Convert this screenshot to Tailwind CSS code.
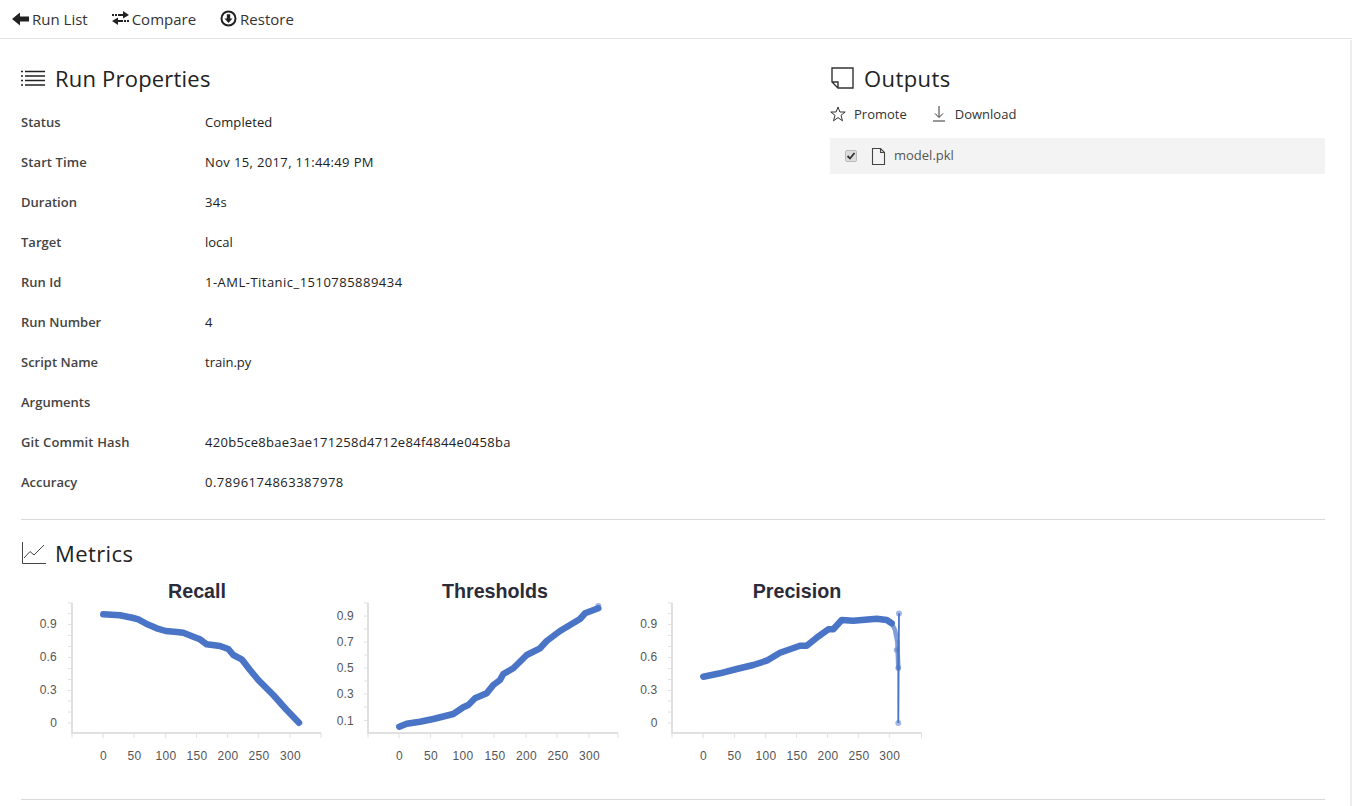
<!DOCTYPE html>
<html lang="en">
<head>
    <meta charset="UTF-8">
    <meta name="viewport" content="width=device-width, initial-scale=1.0">
    <title>Run Properties</title>
    <script src="https://cdn.jsdelivr.net/npm/@tailwindcss/browser@4"></script>
</head>
<body class="relative bg-white h-[806px] overflow-hidden font-['Open_Sans',sans-serif] text-[#222]">
    <!-- Scrollbar thumb -->
    <div class="absolute right-0 top-[40px] bottom-0 w-[2px] bg-[#eeeeee]"></div>

    <!-- Toolbar -->
    <div class="h-[39px] border-b border-[#e6e6e6] flex items-center pl-3 text-[15px] text-[#333]">
        <div class="flex items-center gap-[2px] mr-6">
            <svg width="18" height="14" viewBox="0 0 18 14"><path d="M0 7 L8 0.5 V4.5 H17 V9.5 H8 V13.5 Z" fill="#222"/></svg>
            <span>Run List</span>
        </div>
        <div class="flex items-center gap-[3px] mr-6">
            <svg width="17" height="14" viewBox="0 0 17 14" class="mb-[2px]"><path d="M0 3 H2 V5 H0 Z M3 3 H5 V5 H3 Z M6 3 H11 V0 L17 4 L11 7.5 V5 H6 Z" fill="#222"/><path d="M17 9 H15 V11 H17 Z M14 9 H12 V11 H14 Z M11 9 H6 V6.5 L0 10 L6 14 V11 H11 Z" fill="#222"/></svg>
            <span>Compare</span>
        </div>
        <div class="flex items-center gap-[3px]">
            <svg width="17" height="17" viewBox="0 0 17 17" class="mb-[2px]"><circle cx="8.5" cy="8.5" r="7" fill="none" stroke="#222" stroke-width="2"/><path d="M8.5 13 L4.5 8.5 H6.8 V4.2 H10.2 V8.5 H12.5 Z" fill="#222"/></svg>
            <span>Restore</span>
        </div>
    </div>

    <div class="pl-[21px] pr-[27px]">
        <!-- Properties and outputs -->
        <div class="flex h-[481px] border-b border-[#d9d9d9]">
            <div class="w-[809px]">
                <div class="flex items-center h-[38px] mt-[20px] mb-[6px]">
                    <svg width="24" height="16" viewBox="0 0 24 16" class="mr-[10px]"><path d="M0 1.5 H2 M0 6 H2 M0 10.5 H2 M0 15 H2 M4 1.5 H24 M4 6 H24 M4 10.5 H24 M4 15 H24" stroke="#222" stroke-width="1.4" fill="none"/></svg>
                    <h1 class="text-[22px] font-normal text-[#222] tracking-[0.2px]">Run Properties</h1>
                </div>
                <div class="text-[13px]">
                    <div class="flex items-center h-10"><div class="w-[184px] font-semibold text-[#444]">Status</div><div class="tracking-[0.1px]">Completed</div></div>
                    <div class="flex items-center h-10"><div class="w-[184px] font-semibold text-[#444] tracking-[0.1px]">Start Time</div><div class="tracking-[0.36px]">Nov 15, 2017, 11:44:49 PM</div></div>
                    <div class="flex items-center h-10"><div class="w-[184px] font-semibold text-[#444]">Duration</div><div class="tracking-[0.3px]">34s</div></div>
                    <div class="flex items-center h-10"><div class="w-[184px] font-semibold text-[#444]">Target</div><div>local</div></div>
                    <div class="flex items-center h-10"><div class="w-[184px] font-semibold text-[#444]">Run Id</div><div class="tracking-[0.48px]">1-AML-Titanic_1510785889434</div></div>
                    <div class="flex items-center h-10"><div class="w-[184px] font-semibold text-[#444]">Run Number</div><div>4</div></div>
                    <div class="flex items-center h-10"><div class="w-[184px] font-semibold text-[#444]">Script Name</div><div>train.py</div></div>
                    <div class="flex items-center h-10"><div class="w-[184px] font-semibold text-[#444]">Arguments</div><div></div></div>
                    <div class="flex items-center h-10"><div class="w-[184px] font-semibold text-[#444] tracking-[0.13px]">Git Commit Hash</div><div class="tracking-[0.3px]">420b5ce8bae3ae171258d4712e84f4844e0458ba</div></div>
                    <div class="flex items-center h-10"><div class="w-[184px] font-semibold text-[#444]">Accuracy</div><div class="tracking-[0.5px]">0.7896174863387978</div></div>
                </div>
            </div>
            <div class="flex-1">
                <div class="flex items-center h-[38px] mt-[20px]">
                    <svg width="23" height="22" viewBox="0 0 23 22" class="ml-[1px] mr-[10px]"><path d="M1 1 H22 V21 H7 L1 15 Z M1 15 H7 V21" fill="none" stroke="#333" stroke-width="1.4"/></svg>
                    <h2 class="text-[22px] font-normal text-[#222] tracking-[0.4px]">Outputs</h2>
                </div>
                <div class="flex items-center h-[20px] mt-[8px] text-[13px] text-[#333]">
                    <svg width="16" height="16" viewBox="0 0 16 16" class="mr-[8px] mb-[2px]"><path d="M8 1 L9.9 6 H15.2 L11 9.3 L12.5 14.8 L8 11.6 L3.5 14.8 L5 9.3 L0.8 6 H6.1 Z" fill="none" stroke="#333" stroke-width="1"/></svg>
                    <span class="mr-[25px]">Promote</span>
                    <svg width="14" height="16" viewBox="0 0 14 16" class="mr-[9px] mb-[2px]"><path d="M7 0 V11 M3 7.5 L7 11.5 L11 7.5 M1 15 H13" fill="none" stroke="#333" stroke-width="1"/></svg>
                    <span>Download</span>
                </div>
                <div class="flex items-center h-[36px] mt-[13px] bg-[#f3f3f3] text-[13px] text-[#555]">
                    <span class="ml-[15px] mr-[14px] w-[12px] h-[12px] rounded-[2px] border border-[#bbb] bg-[#ddd] flex items-center justify-center">
                        <svg width="10" height="10" viewBox="0 0 10 10"><path d="M1.5 5 L4 7.5 L8.5 2" fill="none" stroke="#333" stroke-width="1.8"/></svg>
                    </span>
                    <svg width="15" height="17" viewBox="0 0 15 17" class="mr-[8px]"><path d="M1.5 0.5 H9.5 L13.5 4.5 V16.5 H1.5 Z M9.5 0.5 V4.5 H13.5" fill="none" stroke="#444" stroke-width="1.1"/></svg>
                    <span>model.pkl</span>
                </div>
            </div>
        </div>

        <!-- Metrics -->
        <div class="flex items-center h-[30px] mt-[18px]">
            <svg width="24" height="22" viewBox="0 0 24 22" class="ml-[1px] mr-[9px]"><path d="M0.5 0 V21.5 H24" fill="none" stroke="#444" stroke-width="1"/><path d="M2 16 L8 9.5 L12 13 L22 3" fill="none" stroke="#444" stroke-width="1"/></svg>
            <h2 class="text-[22px] font-normal text-[#222] tracking-[0.4px]">Metrics</h2>
        </div>
        <div class="flex h-[192px] mt-[10px] border-b border-[#d9d9d9] box-content pb-[29px]">
            <!-- Recall -->
            <svg width="306" height="192" viewBox="21 578 306 192" font-family="Liberation Sans, sans-serif">
                <text x="197" y="598" text-anchor="middle" font-size="19.7" font-weight="700" fill="#2b2b3a">Recall</text>
                <path d="M72 603 V733 H321" fill="none" stroke="#e0e0e0" stroke-width="2"/>
                <path d="M68 603H72M68 613.6H72M68 624.5H72M68 635.5H72M68 646.5H72M68 657.5H72M68 668.5H72M68 679.5H72M68 690.5H72M68 701H72M68 712H72M68 723H72M72 733V738M103 733V738M134 733V738M165.6 733V738M196.6 733V738M227.6 733V738M258.6 733V738M290 733V738M321 733V738" stroke="#e0e0e0" stroke-width="1"/>
                <g font-size="12" fill="#555" text-anchor="end" letter-spacing="0.2"><text x="57" y="628">0.9</text><text x="57" y="661">0.6</text><text x="57" y="694">0.3</text><text x="57" y="727">0</text></g>
                <g font-size="12" fill="#555" text-anchor="middle" letter-spacing="0.3"><text x="103.5" y="760">0</text><text x="134.5" y="760">50</text><text x="166" y="760">100</text><text x="197" y="760">150</text><text x="228" y="760">200</text><text x="259" y="760">250</text><text x="290.5" y="760">300</text></g>
                <polyline points="103.3,614.3 120,615.3 133.3,618 138.3,619.3 146.7,624 156.7,628.3 165.7,631 176.7,632 183.3,632.7 193.3,636.7 200,639.3 206.7,644.3 220,646 228.3,649 233.3,655 241.7,659.3 250,670 258.3,680 273.3,695 286.7,710 299,722.7" fill="none" stroke="#4a74c6" stroke-width="6.5" stroke-linecap="round" stroke-linejoin="round"/>
            </svg>
            <!-- Thresholds -->
            <svg width="298" height="192" viewBox="327 578 298 192" font-family="Liberation Sans, sans-serif">
                <text x="495" y="598" text-anchor="middle" font-size="19.7" font-weight="700" fill="#2b2b3a">Thresholds</text>
                <path d="M368 603 V733 H618" fill="none" stroke="#e0e0e0" stroke-width="2"/>
                <path d="M364 603H368M364 616H368M364 629H368M364 642H368M364 655H368M364 668H368M364 681H368M364 694H368M364 707H368M364 720.5H368M368 733V738M399 733V738M430.6 733V738M462 733V738M494 733V738M526 733V738M557 733V738M589 733V738M618 733V738" stroke="#e0e0e0" stroke-width="1"/>
                <g font-size="12" fill="#555" text-anchor="end" letter-spacing="0.2"><text x="354" y="620">0.9</text><text x="354" y="646">0.7</text><text x="354" y="672">0.5</text><text x="354" y="698">0.3</text><text x="354" y="725">0.1</text></g>
                <g font-size="12" fill="#555" text-anchor="middle" letter-spacing="0.3"><text x="399.5" y="760">0</text><text x="431" y="760">50</text><text x="463" y="760">100</text><text x="495" y="760">150</text><text x="526.5" y="760">200</text><text x="558" y="760">250</text><text x="589.5" y="760">300</text></g>
                <polyline points="399.3,726.7 406.7,723.7 420,721.7 433.3,719 453.3,714 463.3,707.3 468.3,705 475,698.3 486.7,693.3 493.3,685 500,680 503.3,674 513.3,668.3 526.7,655 540,648.3 546.7,641 560,631 580,619 585,613.3 598.3,608.3" fill="none" stroke="#4a74c6" stroke-width="6.5" stroke-linecap="round" stroke-linejoin="round"/>
                <circle cx="598.3" cy="606" r="3" fill="#4a74c6" fill-opacity="0.55"/>
            </svg>
            <!-- Precision -->
            <svg width="300" height="192" viewBox="625 578 300 192" font-family="Liberation Sans, sans-serif">
                <text x="797" y="598" text-anchor="middle" font-size="19.7" font-weight="700" fill="#2b2b3a">Precision</text>
                <path d="M672 603 V733 H921.5" fill="none" stroke="#e0e0e0" stroke-width="2"/>
                <path d="M668 603H672M668 613.6H672M668 624.5H672M668 635.5H672M668 646.5H672M668 657.5H672M668 668.5H672M668 679.5H672M668 690.5H672M668 701H672M668 712H672M668 723H672M672 733V738M703 733V738M734.6 733V738M765.6 733V738M796.6 733V738M827.6 733V738M858.6 733V738M889.3 733V738M921.5 733V738" stroke="#e0e0e0" stroke-width="1"/>
                <g font-size="12" fill="#555" text-anchor="end" letter-spacing="0.2"><text x="657.5" y="628">0.9</text><text x="657.5" y="661">0.6</text><text x="657.5" y="694">0.3</text><text x="657.5" y="727">0</text></g>
                <g font-size="12" fill="#555" text-anchor="middle" letter-spacing="0.3"><text x="703.5" y="760">0</text><text x="734.5" y="760">50</text><text x="766" y="760">100</text><text x="797" y="760">150</text><text x="828" y="760">200</text><text x="859" y="760">250</text><text x="889.8" y="760">300</text></g>
                <polyline points="703.3,676.7 720,673.3 736.7,669 753.3,665 766.7,660.7 780,652.7 800,645.7 806.7,645.7 816.7,637.7 828.3,629.3 833.3,629.3 841.7,620 853.3,620.7 876.7,618.7 886.7,620 891.7,623.3" fill="none" stroke="#4a74c6" stroke-width="6.5" stroke-linecap="round" stroke-linejoin="round"/>
                <polyline points="891.7,623.3 895,630 897.3,641.7 898.3,668" fill="none" stroke="#4a74c6" stroke-opacity="0.7" stroke-width="4.5" stroke-linecap="round"/>
                <polyline points="898.3,640 898.3,723 899,613.3" fill="none" stroke="#4a74c6" stroke-width="1.8"/>
                <g fill="#4a74c6" fill-opacity="0.5"><circle cx="899" cy="613.5" r="3"/><circle cx="898.3" cy="668" r="3"/><circle cx="898.3" cy="723" r="3"/><circle cx="896.5" cy="650" r="2.8"/></g>
            </svg>
        </div>
    </div>
</body>
</html>
